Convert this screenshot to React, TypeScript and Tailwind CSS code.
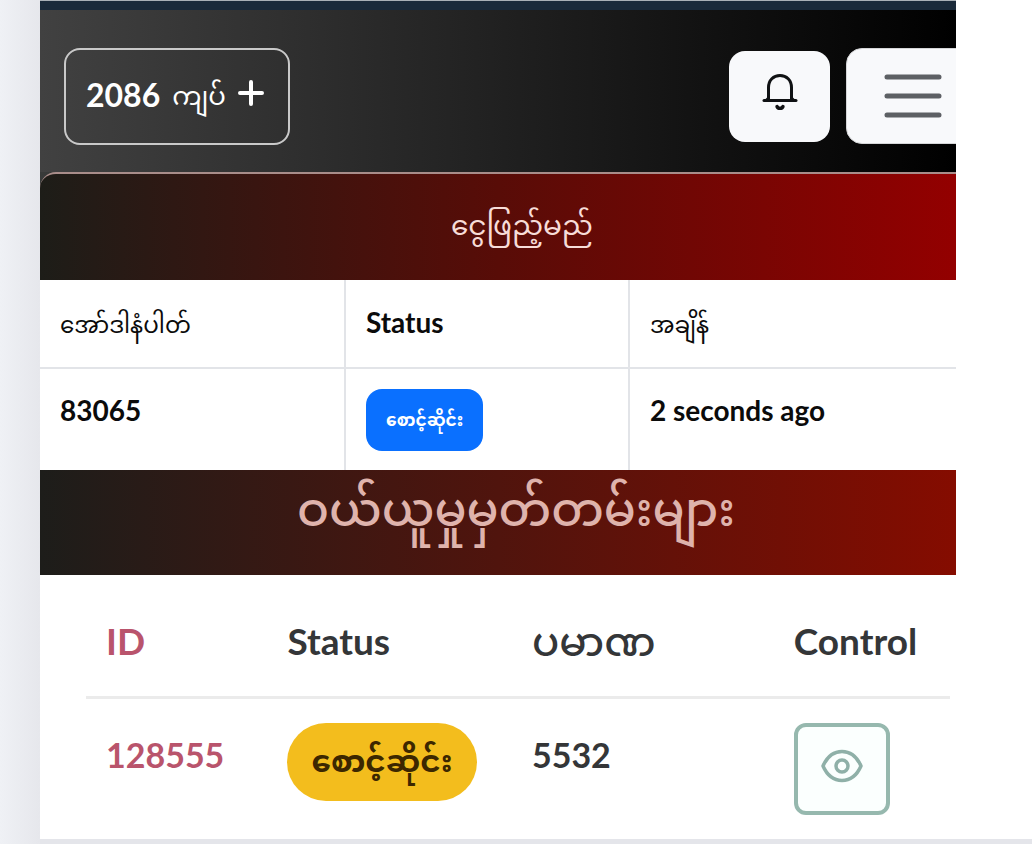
import { ReactNode } from "react";

interface Order {
  id: string;
  status: string;
  time: string;
}

interface Purchase {
  id: string;
  status: string;
  amount: string;
}

const orders: Order[] = [{ id: "83065", status: "စောင့်ဆိုင်း", time: "2 seconds ago" }];

const purchases: Purchase[] = [{ id: "128555", status: "စောင့်ဆိုင်း", amount: "5532" }];

function BellIcon() {
  return (
    <svg viewBox="0 0 36 38" className="w-9 h-[38px]" fill="none" stroke="currentColor" strokeWidth="3" strokeLinecap="round" aria-hidden="true">
      <path d="M6.500 26V14.500C6.500 7 11.500 2.500 18 2.500S29.500 7 29.500 14.500V26" />
      <path d="M2 27.500H34" />
      <path d="M6.500 24.500L3.500 27.500M29.500 24.500L32.500 27.500" strokeWidth="2" />
      <path d="M15 33.500C16 36 20 36 21 33.500" strokeWidth="3.400" />
    </svg>
  );
}

function MenuIcon() {
  return (
    <svg viewBox="0 0 58 46" className="w-[58px] h-[46px]" stroke="currentColor" strokeWidth="5" strokeLinecap="round" aria-hidden="true">
      <path d="M3 4H55M3 23H55M3 42H55" />
    </svg>
  );
}

function EyeIcon() {
  return (
    <svg viewBox="0 0 42 34" className="w-[42px] h-[34px]" fill="none" stroke="currentColor" strokeWidth="3.500" strokeLinejoin="round" aria-hidden="true">
      <path d="M2 17C6 8 13 2.500 21 2.500S36 8 40 17C36 26 29 31.500 21 31.500S6 26 2 17Z" />
      <circle cx="21" cy="17" r="6" />
    </svg>
  );
}

function TopBar() {
  return (
    <header className="border-t border-[#a9b0b6]">
      <div className="flex items-start gap-4 overflow-hidden border-t-[9px] border-[#1a2a3a] bg-linear-to-r/srgb from-[#414141] to-black pt-[38px] pb-[27px] pl-6">
        <button
          type="button"
          className="flex h-[97px] items-center gap-3 rounded-2xl border-2 border-[#c9c9c9] pr-6 pb-1 pl-5 text-white"
        >
          <span className="text-[32px] leading-10 font-bold">2086</span>
          <span className="text-[26px] leading-10">ကျပ်</span>
          <svg viewBox="0 0 26 26" className="mb-1 size-[26px]" stroke="currentColor" strokeWidth="4" strokeLinecap="round" aria-hidden="true">
            <path d="M13 2V24M2 13H24" />
          </svg>
        </button>
        <button
          type="button"
          aria-label="Notifications"
          className="mt-[3px] ml-auto flex h-[91px] w-[101px] shrink-0 justify-center rounded-2xl bg-[#f8f9fb] pt-[22px] text-[#101214]"
        >
          <BellIcon />
        </button>
        <button
          type="button"
          aria-label="Menu"
          className="-mr-6 flex h-24 shrink-0 items-center rounded-2xl border border-[#d5d6d8] bg-[#f8f9fb] px-[37px] text-[#5d6064]"
        >
          <MenuIcon />
        </button>
      </div>
    </header>
  );
}

function GridCell({ children, header }: { children: ReactNode; header?: boolean }) {
  const base = "px-5 text-left align-top text-[28px] leading-9 font-bold border-[#e2e4e8] border-r-2 last:border-r-0";
  return header ? (
    <th className={`${base} border-b-2 pt-6 pb-[25px]`}>{children}</th>
  ) : (
    <td className={`${base} pt-[23px]`}>{children}</td>
  );
}

function OrderTable() {
  return (
    <section>
      <div className="bg-linear-to-r/srgb from-[#383a39] to-black">
        <h2 className="rounded-tl-2xl border-t-2 border-[#a98d8a] bg-linear-to-r/srgb from-[#1d1d18] via-[#580c07] to-[#930000] pt-[26px] pb-8 pl-12 text-center text-[28px] leading-[48px] text-[#f7dcd8]">
          ငွေဖြည့်မည်
        </h2>
      </div>
      <table className="w-full table-fixed border-separate border-spacing-0 text-[#0b0b0b]">
        <colgroup>
          <col className="w-[33.400%]" />
          <col className="w-[31%]" />
          <col />
        </colgroup>
        <thead>
          <tr>
            <GridCell header>
              <span className="text-[23px] font-normal">အော်ဒါနံပါတ်</span>
            </GridCell>
            <GridCell header>Status</GridCell>
            <GridCell header>
              <span className="text-[23px] font-normal">အချိန်</span>
            </GridCell>
          </tr>
        </thead>
        <tbody>
          {orders.map((order) => (
            <tr key={order.id}>
              <GridCell>{order.id}</GridCell>
              <td className="border-r-2 border-[#e2e4e8] px-5 pt-5 pb-[19px] align-top">
                <span className="inline-flex h-[62px] items-center rounded-2xl bg-[#0a70ff] px-5 align-top text-[17px] leading-6 font-bold whitespace-nowrap text-white">
                  {order.status}
                </span>
              </td>
              <GridCell>{order.time}</GridCell>
            </tr>
          ))}
        </tbody>
      </table>
    </section>
  );
}

function PurchaseTable() {
  return (
    <section>
      <h2 className="bg-linear-to-r/srgb from-[#1d1d1a] via-[#50140d] to-[#850c00] pt-[10px] pb-[39px] pl-9 text-center text-[47px] leading-14 font-medium text-[#dfb3ac]">
        ဝယ်ယူမှုမှတ်တမ်းများ
      </h2>
      <div className="pr-1.5 pl-[46px]">
        <table className="w-full table-fixed border-separate border-spacing-0 text-left text-[#343638]">
          <colgroup>
            <col className="w-[21%]" />
            <col className="w-[28.300%]" />
            <col className="w-[30.300%]" />
            <col />
          </colgroup>
          <thead>
            <tr className="text-[37px] leading-11">
              <th className="border-b-3 border-[#ebebeb] pt-11 pb-[33px] pl-5 font-bold text-[#b9546c]">ID</th>
              <th className="border-b-3 border-[#ebebeb] pt-11 pb-[33px] pl-5 font-bold">Status</th>
              <th className="border-b-3 border-[#ebebeb] pt-11 pb-[33px] pl-5 text-[40px] font-medium">ပမာဏ</th>
              <th className="border-b-3 border-[#ebebeb] pt-11 pb-[33px] pl-5 font-bold">Control</th>
            </tr>
          </thead>
          <tbody>
            {purchases.map((purchase) => (
              <tr key={purchase.id} className="align-top text-[34px] leading-11 font-bold">
                <td className="pt-[34px] pl-5 text-[#b9546c]">{purchase.id}</td>
                <td className="pt-6 pl-5">
                  <span className="inline-flex h-[78px] items-center rounded-full bg-[#f3bd1d] px-6 pb-1 align-top text-[31px] leading-9 font-bold whitespace-nowrap text-[#3c2700]">
                    {purchase.status}
                  </span>
                </td>
                <td className="pt-[34px] pl-5">{purchase.amount}</td>
                <td className="pt-6 pb-6 pl-5">
                  <button
                    type="button"
                    aria-label="View"
                    className="flex h-[92px] w-24 justify-center rounded-xl border-4 border-[#96b8ae] bg-[#fbfffe] pt-[22px] text-[#8fb0a8]"
                  >
                    <EyeIcon />
                  </button>
                </td>
              </tr>
            ))}
          </tbody>
        </table>
      </div>
    </section>
  );
}

export default function App() {
  return (
    <div className="min-h-screen bg-white bg-linear-to-r from-[#eff1f5] to-[#e6e7ec] bg-[length:40px_100%] bg-no-repeat pr-[76px] pl-10 font-['Lato','Noto_Sans_Myanmar','Padauk',sans-serif]">
      <main className="bg-white">
        <TopBar />
        <OrderTable />
        <PurchaseTable />
      </main>
      <footer className="-mr-[76px] h-[5px] bg-[#e4e5ea]" />
    </div>
  );
}
